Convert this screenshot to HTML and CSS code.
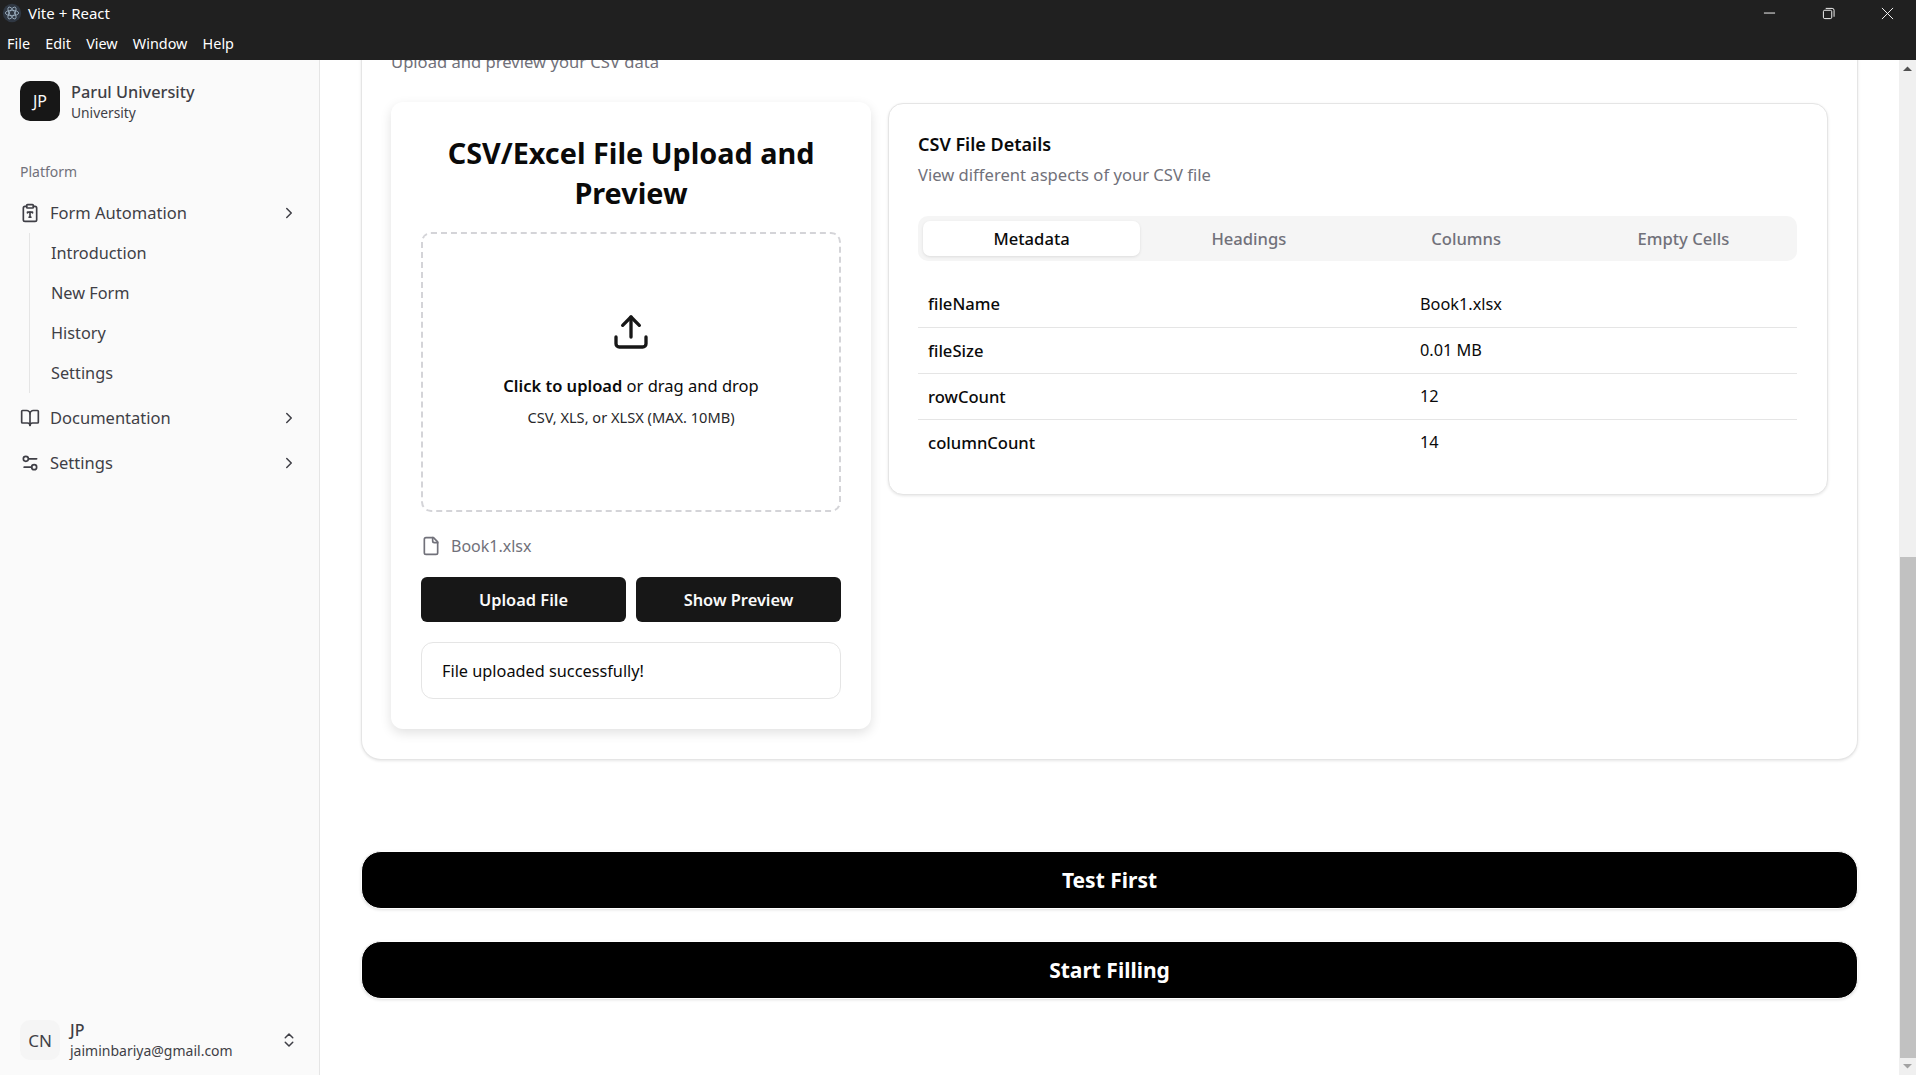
FILE: index.html
```html
<!DOCTYPE html>
<html lang="en">
<head>
    <meta charset="UTF-8">
    <meta name="viewport" content="width=device-width, initial-scale=1.0">
    <title>Vite + React</title>
    <link rel="stylesheet" href="styles.css">
</head>
<body>
    <header class="titlebar">
        <div class="titlebar-top">
            <svg class="app-icon" viewBox="0 0 24 24" fill="none" stroke="#9fb3c4" stroke-width="1">
                <circle cx="12" cy="12" r="11" fill="#2f3742" stroke="none"/>
                <ellipse cx="12" cy="12" rx="8" ry="3.2"/>
                <ellipse cx="12" cy="12" rx="8" ry="3.2" transform="rotate(60 12 12)"/>
                <ellipse cx="12" cy="12" rx="8" ry="3.2" transform="rotate(120 12 12)"/>
            </svg>
            <span class="app-title">Vite + React</span>
            <div class="window-controls">
                <svg viewBox="0 0 14 14" fill="none" stroke="#fff" stroke-width="1"><path d="M1 6.5h12"/></svg>
                <svg viewBox="0 0 14 14" fill="none" stroke="#fff" stroke-width="1"><rect x="1.5" y="3.5" width="9" height="9" rx="1.5"/><path d="M4 1.5h7a2 2 0 0 1 2 2v7"/></svg>
                <svg viewBox="0 0 14 14" fill="none" stroke="#fff" stroke-width="1"><path d="M1 1l12 12M13 1L1 13"/></svg>
            </div>
        </div>
        <nav class="menubar">
            <span>File</span>
            <span>Edit</span>
            <span>View</span>
            <span>Window</span>
            <span>Help</span>
        </nav>
    </header>

    <div class="app">
        <aside class="sidebar">
            <div class="brand">
                <div class="brand-logo">JP</div>
                <div class="brand-text">
                    <div class="brand-name">Parul University</div>
                    <div class="brand-sub">University</div>
                </div>
            </div>

            <div class="nav-label">Platform</div>

            <div class="nav-item">
                <svg class="nav-icon" viewBox="0 0 24 24"><rect width="8" height="4" x="8" y="2" rx="1" ry="1"/><path d="M16 4h2a2 2 0 0 1 2 2v14a2 2 0 0 1-2 2H6a2 2 0 0 1-2-2V6a2 2 0 0 1 2-2h2"/><path d="M9 12v-1h6v1"/><path d="M11 17h2"/><path d="M12 11v6"/></svg>
                <span class="nav-text">Form Automation</span>
                <svg class="nav-chevron" viewBox="0 0 24 24"><path d="m9 18 6-6-6-6"/></svg>
            </div>
            <div class="subnav">
                <a>Introduction</a>
                <a>New Form</a>
                <a>History</a>
                <a>Settings</a>
            </div>
            <div class="nav-item">
                <svg class="nav-icon" viewBox="0 0 24 24"><path d="M12 7v14"/><path d="M3 18a1 1 0 0 1-1-1V4a1 1 0 0 1 1-1h5a4 4 0 0 1 4 4 4 4 0 0 1 4-4h5a1 1 0 0 1 1 1v13a1 1 0 0 1-1 1h-6a3 3 0 0 0-3 3 3 3 0 0 0-3-3z"/></svg>
                <span class="nav-text">Documentation</span>
                <svg class="nav-chevron" viewBox="0 0 24 24"><path d="m9 18 6-6-6-6"/></svg>
            </div>
            <div class="nav-item">
                <svg class="nav-icon" viewBox="0 0 24 24"><path d="M20 7h-9"/><path d="M14 17H5"/><circle cx="17" cy="17" r="3"/><circle cx="7" cy="7" r="3"/></svg>
                <span class="nav-text">Settings</span>
                <svg class="nav-chevron" viewBox="0 0 24 24"><path d="m9 18 6-6-6-6"/></svg>
            </div>

            <div class="user">
                <div class="user-avatar">CN</div>
                <div class="user-text">
                    <div class="user-name">JP</div>
                    <div class="user-mail">jaiminbariya@gmail.com</div>
                </div>
                <svg class="nav-chevron" viewBox="0 0 24 24"><path d="m7 15 5 5 5-5"/><path d="m7 9 5-5 5 5"/></svg>
            </div>
        </aside>

        <main class="content">
            <section class="outer-card">
                <p class="outer-sub">Upload and preview your CSV data</p>
                <div class="outer-grid">
                    <div class="upload-card">
                        <h2>CSV/Excel File Upload and Preview</h2>
                        <div class="dropzone">
                            <svg class="upload-icon" viewBox="0 0 24 24"><path d="M21 15v4a2 2 0 0 1-2 2H5a2 2 0 0 1-2-2v-4"/><polyline points="17 8 12 3 7 8"/><line x1="12" x2="12" y1="3" y2="15"/></svg>
                            <p class="drop-text"><strong>Click to upload</strong> or drag and drop</p>
                            <p class="drop-hint">CSV, XLS, or XLSX (MAX. 10MB)</p>
                        </div>
                        <div class="file-row">
                            <svg class="file-icon" viewBox="0 0 24 24"><path d="M15 2H6a2 2 0 0 0-2 2v16a2 2 0 0 0 2 2h12a2 2 0 0 0 2-2V7Z"/><path d="M14 2v4a2 2 0 0 0 2 2h4"/></svg>
                            <span>Book1.xlsx</span>
                        </div>
                        <div class="btn-row">
                            <button class="btn-dark">Upload File</button>
                            <button class="btn-dark">Show Preview</button>
                        </div>
                        <div class="status">File uploaded successfully!</div>
                    </div>

                    <div class="details-card">
                        <h3>CSV File Details</h3>
                        <p class="details-sub">View different aspects of your CSV file</p>
                        <div class="tabs">
                            <span class="tab active">Metadata</span>
                            <span class="tab">Headings</span>
                            <span class="tab">Columns</span>
                            <span class="tab">Empty Cells</span>
                        </div>
                        <table class="meta-table">
                            <tr><th>fileName</th><td>Book1.xlsx</td></tr>
                            <tr><th>fileSize</th><td>0.01 MB</td></tr>
                            <tr><th>rowCount</th><td>12</td></tr>
                            <tr><th>columnCount</th><td>14</td></tr>
                        </table>
                    </div>
                </div>
            </section>

            <button class="btn-wide btn-first">Test First</button>
            <button class="btn-wide">Start Filling</button>
        </main>

        <div class="scrollbar">
            <svg class="scroll-arrow" viewBox="0 0 17 17"><path d="M4 11h9L8.5 6.5z" fill="#505050"/></svg>
            <div class="scroll-track"><div class="scroll-thumb"></div></div>
            <svg class="scroll-arrow" viewBox="0 0 17 17"><path d="M4 6h9L8.5 10.5z" fill="#a3a3a3"/></svg>
        </div>
    </div>
</body>
</html>
```

FILE: styles.css
```css
* {
    box-sizing: border-box;
}

html, body {
    height: 100%;
}

body {
    margin: 0;
    display: flex;
    flex-direction: column;
    overflow: hidden;
    font-family: "Noto Sans", "Open Sans", Arial, sans-serif;
    color: #0a0a0a;
    background-color: #fff;
}

/* Window frame */
.titlebar {
    height: 60px;
    flex-shrink: 0;
    background-color: #202020;
    color: #fff;
    position: relative;
    z-index: 2;
}

.titlebar-top {
    height: 26px;
    display: flex;
    align-items: center;
    padding-left: 2px;
}

.app-icon {
    width: 20px;
    height: 20px;
}

.app-title {
    margin-left: 6px;
    font-size: 15px;
}

.window-controls {
    margin-left: auto;
    display: flex;
    gap: 46px;
    padding-right: 22px;
}

.window-controls svg {
    width: 13px;
    height: 13px;
}

.menubar {
    display: flex;
    gap: 15.2px;
    padding: 8px 7px 0;
    font-size: 14.4px;
}

/* Page layout */
.app {
    flex: 1;
    display: flex;
    min-height: 0;
}

.sidebar {
    width: 320px;
    flex-shrink: 0;
    display: flex;
    flex-direction: column;
    padding: 21px 20px 15px;
    background-color: #fafafa;
    border-right: 1px solid #e5e5e5;
    color: #3f3f46;
}

.brand {
    height: 40px;
    display: flex;
    gap: 11px;
}

.brand-logo {
    width: 40px;
    height: 40px;
    display: flex;
    align-items: center;
    justify-content: center;
    border-radius: 10px;
    background-color: #171717;
    color: #fafafa;
    font-size: 16px;
}

.brand-name {
    font-size: 16.3px;
    font-weight: 500;
    line-height: 22px;
}

.brand-sub {
    font-size: 13.8px;
    line-height: 20px;
}

.nav-label {
    margin-top: 40px;
    margin-bottom: 7px;
    font-size: 14px;
    line-height: 22px;
    color: #71717a;
}

.nav-item {
    height: 45px;
    display: flex;
    align-items: center;
    gap: 10px;
    font-size: 16.5px;
}

.nav-icon {
    width: 20px;
    height: 20px;
    flex-shrink: 0;
    fill: none;
    stroke: #3f3f46;
    stroke-width: 2;
    stroke-linecap: round;
    stroke-linejoin: round;
}

.nav-chevron {
    width: 18px;
    height: 18px;
    margin-left: auto;
    margin-right: 1px;
    flex-shrink: 0;
    fill: none;
    stroke: #3f3f46;
    stroke-width: 2;
    stroke-linecap: round;
    stroke-linejoin: round;
}

.subnav {
    display: flex;
    flex-direction: column;
    margin: -2px 0 2px 9px;
    padding-left: 21px;
    border-left: 1px solid #e5e5e5;
    font-size: 16.3px;
}

.subnav a {
    height: 40px;
    line-height: 40px;
}

.user {
    height: 40px;
    margin-top: auto;
    display: flex;
    gap: 10px;
}

.user .nav-chevron {
    align-self: center;
}

.user-avatar {
    width: 40px;
    height: 40px;
    display: flex;
    align-items: center;
    justify-content: center;
    border-radius: 10px;
    background-color: #f5f5f5;
    font-size: 17px;
}

.user-name {
    font-size: 16px;
    font-weight: 500;
    line-height: 20px;
}

.user-mail {
    font-size: 14px;
    line-height: 21px;
}

/* Main column */
.content {
    flex: 1;
    min-width: 0;
    overflow: hidden;
    padding: 0 41px 0 41px;
}

.outer-card {
    margin-top: -40px;
    height: 740px;
    padding: 28px 29px 0;
    border: 1px solid #e5e5e5;
    border-top: none;
    border-radius: 0 0 20px 20px;
    box-shadow: 0 1px 3px rgba(0, 0, 0, 0.1);
    background-color: #fff;
}

.outer-sub {
    margin: 0 0 26px;
    font-size: 16.6px;
    line-height: 28px;
    color: #71717a;
}

.outer-grid {
    display: flex;
    align-items: flex-start;
    gap: 17px;
}

.upload-card {
    width: 480px;
    flex-shrink: 0;
    padding: 31px 30px 30px;
    border-radius: 12px;
    box-shadow: 0 4px 12px rgba(0, 0, 0, 0.12);
    background-color: #fff;
}

.upload-card h2 {
    margin: 0 0 19px;
    font-size: 28.8px;
    font-weight: 700;
    line-height: 40px;
    text-align: center;
}

.dropzone {
    height: 280px;
    display: flex;
    flex-direction: column;
    align-items: center;
    padding-top: 78px;
    border: 2px dashed #d4d4d8;
    border-radius: 10px;
}

.upload-icon {
    width: 40px;
    height: 40px;
    fill: none;
    stroke: #171717;
    stroke-width: 2;
    stroke-linecap: round;
    stroke-linejoin: round;
}

.drop-text {
    margin: 21px 0 0;
    font-size: 16.5px;
    line-height: 26px;
}

.drop-text strong {
    font-weight: 600;
}

.drop-hint {
    margin: 6px 0 0;
    font-size: 14.6px;
    line-height: 24px;
    color: #27272a;
}

.file-row {
    display: flex;
    align-items: center;
    gap: 10px;
    margin-top: 21px;
    font-size: 16px;
    line-height: 26px;
    color: #71717a;
}

.file-icon {
    width: 20px;
    height: 20px;
    fill: none;
    stroke: #71717a;
    stroke-width: 2;
    stroke-linecap: round;
    stroke-linejoin: round;
}

.btn-row {
    display: flex;
    gap: 10px;
    margin-top: 18px;
}

.btn-dark {
    flex: 1;
    height: 45px;
    border: none;
    border-radius: 6px;
    background-color: #171717;
    color: #fafafa;
    font-family: inherit;
    font-size: 16.4px;
    font-weight: 600;
}

.status {
    margin-top: 20px;
    height: 57px;
    padding: 0 20px;
    border: 1px solid #e5e5e5;
    border-radius: 12px;
    font-size: 16.3px;
    line-height: 56px;
}

.details-card {
    flex: 1;
    height: 392px;
    margin-top: 1px;
    padding: 28px 30px 28px 29px;
    border: 1px solid #e5e5e5;
    border-radius: 15px;
    box-shadow: 0 1px 3px rgba(0, 0, 0, 0.1);
    background-color: #fff;
}

.details-card h3 {
    margin: 0;
    font-size: 18px;
    font-weight: 600;
    line-height: 24px;
}

.details-sub {
    margin: 7px 0 0;
    font-size: 16.6px;
    line-height: 24px;
    color: #71717a;
}

.tabs {
    display: grid;
    grid-template-columns: repeat(4, 1fr);
    height: 45px;
    margin-top: 29px;
    padding: 5px;
    border-radius: 10px;
    background-color: #f5f5f5;
}

.tab {
    display: flex;
    align-items: center;
    justify-content: center;
    border-radius: 7px;
    font-size: 16.6px;
    font-weight: 500;
    color: #71717a;
}

.tab.active {
    background-color: #fff;
    color: #0a0a0a;
    box-shadow: 0 1px 3px rgba(0, 0, 0, 0.1);
}

.meta-table {
    width: 100%;
    margin-top: 20px;
    border-collapse: collapse;
    font-size: 16.3px;
}

.meta-table th, .meta-table td {
    height: 46px;
    padding: 0 10px;
    text-align: left;
    font-weight: 400;
    border-bottom: 1px solid #e5e5e5;
}

.meta-table th {
    width: 492px;
    font-size: 16.6px;
    font-weight: 500;
}

.meta-table tr:last-child th, .meta-table tr:last-child td {
    border-bottom: none;
}

.btn-wide {
    display: block;
    width: 100%;
    height: 58px;
    margin-top: 32px;
    border: 1px solid #fff;
    border-radius: 20px;
    box-shadow: 0 1px 3px rgba(0, 0, 0, 0.12);
    background-color: #000;
    color: #fff;
    font-family: inherit;
    font-size: 21px;
    font-weight: 700;
}

.btn-first {
    margin-top: 91px;
}

/* Window scrollbar */
.scrollbar {
    width: 17px;
    flex-shrink: 0;
    display: flex;
    flex-direction: column;
    background-color: #f0f0f0;
}

.scroll-arrow {
    width: 17px;
    height: 17px;
    flex-shrink: 0;
}

.scroll-track {
    flex: 1;
    padding-top: 480px;
}

.scroll-thumb {
    height: 100%;
    margin-left: 1px;
    background-color: #c1c1c1;
}
```
